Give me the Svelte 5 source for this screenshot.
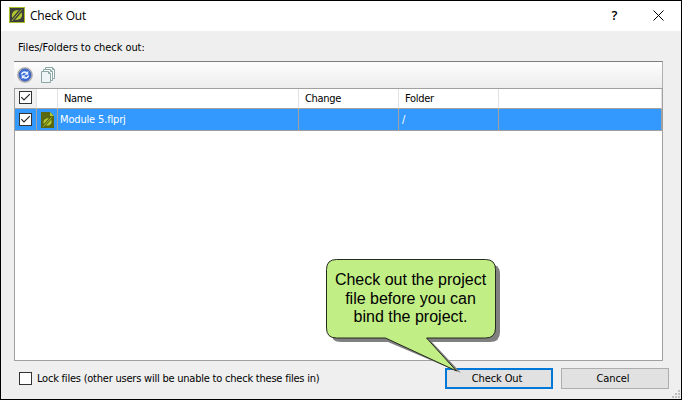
<script>
  let allChecked = $state(true);
  let rowChecked = $state(true);
  let lockFiles = $state(false);
</script>

{#snippet check(on, toggle, label)}
  <button class="check" role="checkbox" aria-checked={on} aria-label={label} onclick={toggle}>
    {#if on}
      <svg width="11" height="11" viewBox="0 0 11 11"><path d="M1.3 5.2 4 8 9.8 2.2" fill="none" stroke="#222" stroke-width="1.1" /></svg>
    {/if}
  </button>
{/snippet}

<div class="window">
  <header class="title">
    <svg class="logo" width="16" height="16" viewBox="0 0 16 16">
      <rect x=".5" y=".5" width="15" height="15" fill="#3b3d3c" stroke="#a9be25" />
      <path d="M3.2 11C1.8 6.2 4.6 2.8 9.8 3L3.2 11Z" fill="#b2c62d" />
      <path d="M12.6 5.2C14.4 9.6 11.4 13.4 6 12.9L12.6 5.2Z" fill="#b2c62d" />
      <path d="M2.8 14 12.8 2.4" stroke="#b2c62d" stroke-width="1" />
    </svg>
    <h1>Check Out</h1>
    <span class="help">?</span>
    <svg class="close" width="11" height="11" viewBox="0 0 11 11"><path d="M.5.5 10.5 10.5M10.5.5.5 10.5" stroke="#000" stroke-width="1" /></svg>
  </header>

  <main>
    <p class="caption">Files/Folders to check out:</p>

    <div class="toolbar">
      <svg width="16" height="16" viewBox="0 0 16 16">
        <circle cx="8" cy="8" r="7.2" fill="#dedede" stroke="#a4a5aa" stroke-width="1.2" />
        <circle cx="8" cy="8" r="6" fill="#3a6bd8" stroke="#2f4fa8" stroke-width=".8" />
        <path d="M3.8 7.6C4.2 4.5 7.5 3.4 10 5L11.3 3.9V7.8H7.4L8.7 6.4C7.2 5.6 5.9 6 5.4 7.6ZM12.2 8.4C11.8 11.5 8.5 12.6 6 11L4.7 12.1V8.2H8.6L7.3 9.6C8.8 10.4 10.1 10 10.6 8.4Z" fill="#e5eeff" />
      </svg>
      <svg class="copy" width="15" height="16" viewBox="0 0 15 16" stroke="#8ba7a4" stroke-width="1">
        <path d="M4.5.5H11.5L13.5 2.5V11.5H4.5Z" fill="#fff" />
        <path d="M11.5.5V2.5H13.5" fill="#a8bfbc" />
        <path d="M2.5 2.5H9.5L11.5 4.5V13.5H2.5Z" fill="#fff" />
        <path d="M9.5 2.5V4.5H11.5" fill="#a8bfbc" />
        <path d="M.5 4.5H7.5L9.5 6.5V15.5H.5Z" fill="#eef5f4" />
        <path d="M7.5 4.5V6.5H9.5" fill="#a8bfbc" />
      </svg>
    </div>

    <div class="table">
      <div class="row head">
        <div class="cell box">{@render check(allChecked, () => (allChecked = !allChecked), 'Select all')}</div>
        <div class="cell"></div>
        <div class="cell"><span>Name</span></div>
        <div class="cell"><span>Change</span></div>
        <div class="cell"><span>Folder</span></div>
        <div class="cell"></div>
      </div>
      <div class="row item">
        <div class="cell box">{@render check(rowChecked, () => (rowChecked = !rowChecked), 'Select file')}</div>
        <div class="cell filecell">
          <svg class="file" width="13" height="16" viewBox="0 0 13 16">
            <path d="M0 0H9L13 4V16H0Z" fill="#5b6812" />
            <path d="M9 0V4H13Z" fill="#b1c52c" />
            <path d="M2.7 12C1.6 8.6 3.8 6 7.8 6.2L2.7 12Z" fill="#b7ca30" />
            <path d="M10.2 7.7C11.6 11.2 9 14.1 5 13.5L10.2 7.7Z" fill="#b7ca30" />
            <path d="M2.4 14.6 10.4 5.6" stroke="#b7ca30" stroke-width=".9" />
          </svg>
        </div>
        <div class="cell"><span class="fname">Module 5.flprj</span></div>
        <div class="cell"></div>
        <div class="cell"><span>/</span></div>
        <div class="cell"></div>
      </div>
    </div>

    <footer>
      {@render check(lockFiles, () => (lockFiles = !lockFiles), 'Lock files')}
      <span class="lock">Lock files (other users will be unable to check these files in)</span>
      <button class="btn primary">Check Out</button>
      <button class="btn">Cancel</button>
    </footer>
  </main>

  <svg class="grip" width="8" height="8" viewBox="0 0 8 8" fill="#bfbfbf">
    <path d="M6 0h2v2H6zM3 3h2v2H3zM6 3h2v2H6zM0 6h2v2H0zM3 6h2v2H3zM6 6h2v2H6z" />
  </svg>

  <div class="callout">
    <svg width="182" height="122" viewBox="0 0 182 122">
      <path d="M16 5H165Q175 5 175 15V73Q175 83 165 83H107L136 114 63 83H16Q6 83 6 73V15Q6 5 16 5Z" fill="#808080" />
      <path d="M11.5 .5H160.5Q170.5 .5 170.5 10.5V69Q170.5 79 160.5 79H101.5L131.5 112 60.5 79H11.5Q1.5 79 1.5 69V10.5Q1.5 .5 11.5 .5Z" fill="#c2ee86" stroke="#242a1c" />
    </svg>
    <p>Check out the project<br />file before you can<br />bind the project.</p>
  </div>
</div>

<style>
  :global(body) { margin: 0; }
  * { box-sizing: border-box; }
  p, h1 { margin: 0; font-weight: normal; }
  svg { display: block; flex: none; }
  .window {
    position: relative;
    display: flex;
    flex-direction: column;
    width: 682px;
    height: 400px;
    border: 1px solid #000;
    background: #efefef;
    color: #000;
    font: 11px/14px "DejaVu Sans Condensed", "DejaVu Sans", sans-serif;
    font-stretch: condensed;
    letter-spacing: -0.3px;
    overflow: hidden;
  }
  .title {
    display: flex;
    align-items: center;
    height: 30px;
    padding: 0 17px 2px 8px;
    background: #fff;
  }
  h1 { flex: 1; margin-left: 5px; padding-top: 1px; font: 12px/16px "Open Sans", sans-serif; letter-spacing: -0.2px; }
  .help { margin-right: 36px; font: 600 13px/16px "Open Sans", sans-serif; }
  main { display: flex; flex-direction: column; padding: 0 18px 0 13px; }
  .caption { height: 30px; padding: 10px 0 0 4px; letter-spacing: -0.07px; }
  .toolbar {
    display: flex;
    align-items: center;
    gap: 8px;
    width: 649px;
    height: 27px;
    padding: 0 3px;
    border-top: 1px solid #7d7d7d;
    border-right: 1px solid #b0b0b0;
    background: linear-gradient(#fdfdfd, #ededed);
  }
  .table {
    width: 649px;
    height: 273px;
    border: 1px solid #a0a0a0;
    background: #fff;
  }
  .row { display: grid; grid-template-columns: 22px 21px 241px 100px 100px 163px; }
  .cell { display: flex; align-items: center; border-right: 1px solid #e2e2e2; border-bottom: 1px solid #a0a0a0; }
  .head { height: 20px; }
  .head .cell { padding-left: 6px; }
  .item { height: 22px; color: #fff; background: #3399ff; }
  .item .cell { padding-left: 3px; border-color: #a0a0a0; }
  .item .filecell { padding-left: 4px; padding-top: 1px; }
  .fname { margin-left: -1px; letter-spacing: -0.16px; }
  .row .box, .item .box { padding-left: 4px; }
  .head .box { padding-bottom: 2px; background: #f1f1f1; }
  .check {
    flex: none;
    width: 13px;
    height: 13px;
    padding: 0;
    border: 1px solid #333;
    background: #fff;
  }
  footer { display: flex; align-items: center; width: 655px; height: 21px; margin-top: 7px; padding-left: 5px; }
  .lock { flex: 1; margin-left: 5px; white-space: nowrap; letter-spacing: -0.22px; }
  .btn {
    width: 108px;
    height: 21px;
    margin-left: 8px;
    padding: 0 4px 0 0;
    border: 1px solid #adadad;
    background: #e1e1e1;
    color: #000;
    font: inherit;
    letter-spacing: -0.1px;
  }
  .primary { border: 2px solid #0078d7; }
  .grip { position: absolute; right: 1px; bottom: 1px; }
  .callout { position: absolute; left: 324px; top: 258px; width: 182px; }
  .callout p {
    position: absolute;
    left: 0;
    top: 12px;
    width: 171px;
    text-align: center;
    font: 16px/18.5px "Liberation Sans", Arial, sans-serif;
    letter-spacing: 0;
    white-space: nowrap;
  }
</style>
